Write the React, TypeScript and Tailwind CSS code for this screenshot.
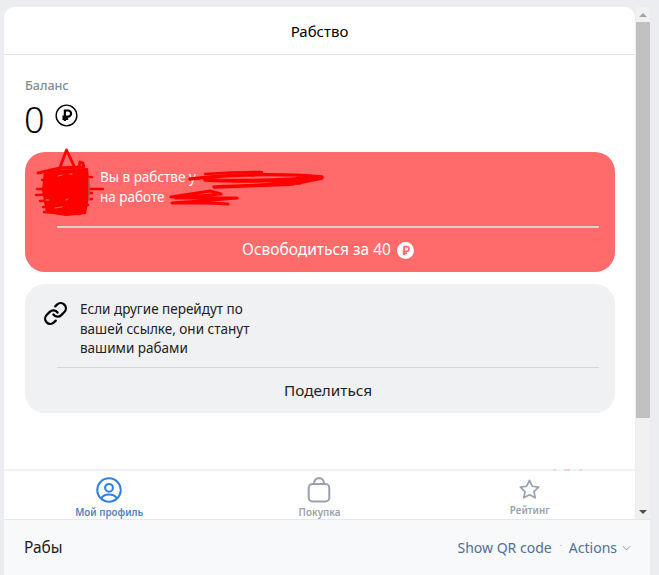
import { useState } from 'react';

function RubleIcon({ className }: { className?: string }) {
  return (
    <svg viewBox="0 0 24 24" className={className} fill="none" stroke="currentColor">
      <circle cx="12" cy="12" r="10.800" strokeWidth="1.500" />
      <path d="M10.300 17.800V6.800h3.300a3.200 3.200 0 0 1 0 6.400H7.800M7.800 15.600h6" strokeWidth="2.300" />
    </svg>
  );
}

function RubleFilled() {
  return (
    <svg viewBox="0 0 24 24" className="w-[17px] h-[17px]">
      <circle cx="12" cy="12" r="12" fill="#ffffff" />
      <path d="M10 18.500V6.500h3.600a3.400 3.400 0 0 1 0 6.800H8M8 16h6.200" fill="none" stroke="#ff6b6b" strokeWidth="2.400" />
    </svg>
  );
}

// red marker scrawl lying over the avatar and the names
function Scribble() {
  return (
    <svg viewBox="30 145 300 75" className="absolute left-[30px] top-[145px] w-[300px] h-[75px] pointer-events-none" fill="none" stroke="#ff0000" strokeLinecap="round" strokeLinejoin="round">
      <path d="M59 170 L66.500 150 L75 168" strokeWidth="2.800" />
      <path d="M78 170 L80 162 L83 163 L85 174" strokeWidth="2.800" />
      <path d="M38 173 L60 168 L82 167" strokeWidth="3" />
      <path d="M44 171 L88 168 L90 190 L86 214 L66 216 L46 213 L42 190 Z" fill="#ff0000" stroke="none" />
      <path d="M37 189 L103 189 M36 195 L92 193 M42 180 L92 177 M40 201 L92 199 M44 212 L80 214 M43 207 L88 205" strokeWidth="2.400" />
      <path d="M89 178 L89 200" stroke="#8a7a60" strokeWidth="1.200" />
      <path d="M58 176 L62 175 M70 174 L72 174 M46 200 L49 200 M55 208 L62 207 M66 200 L68 199" stroke="#a8965a" strokeWidth="1" />
      <path d="M190 179 C215 176 270 172 322 177 C290 180 240 181 205 180 C240 182 290 181 322 178 L292 184 C260 186 225 186 214 187 C240 187 270 184 300 183" strokeWidth="3.400" />
      <path d="M205 174 C235 172 255 172 262 172" strokeWidth="2.400" />
      <path d="M171 197 L210 191 L221 194 L176 198 L237 198 L200 201 L172 203 L210 203 L228 204" strokeWidth="3.200" />
    </svg>
  );
}

function TabItem({ label, active, children, labelClass }: { label: string; active?: boolean; children: React.ReactNode; labelClass: string }) {
  return (
    <div className={`flex-1 flex flex-col items-center ${labelClass}`}>
      {children}
      <span className={`text-[9.800px] font-semibold leading-[12px] ${active ? 'text-[#5181c7]' : 'text-[#99a2ad]'}`}>{label}</span>
    </div>
  );
}

export default function App() {
  const [tab] = useState('profile');

  return (
    <div className="relative w-[659px] h-[575px] overflow-hidden bg-[#ebedf0] pt-[7px] pl-[4px] pr-[9px] flex flex-col font-['Noto_Sans','Open_Sans',sans-serif] text-[#000000]">
      <div className="flex-1 flex min-h-0">
        <div className="w-[631px] bg-white rounded-t-[10px] flex flex-col">
          <div className="h-[48px] shrink-0 flex items-center justify-center border-b border-[#e3e4e6] pt-[1px] text-[15px]">
            Рабство
          </div>
          <div className="flex-1 pl-[21px] pr-[20px] pt-[22px]">
            <div className="text-[12.500px] font-medium leading-[18px] text-[#818c99]">Баланс</div>
            <div className="flex items-start h-[47px] mt-[1px]">
              <span className="text-[36px] font-light leading-[47px] -ml-[1px]">0</span>
              <RubleIcon className="w-[23px] h-[23px] ml-[10px] mt-[8px]" />
            </div>
            <div className="mt-[9px] h-[120px] rounded-[20px] bg-[#ff6b6b] text-white flex flex-col">
              <div className="h-[74px] shrink-0 pl-[75px] pt-[16px] text-[13.500px] leading-[19.500px]">
                <div>Вы в рабстве у</div>
                <div>на работе</div>
              </div>
              <div className="ml-[32px] mr-[16px] h-[2px] bg-[#dcd0d0]" />
              <div className="flex-1 ml-[32px] mr-[16px] flex items-center justify-center gap-[6px] text-[15.500px]">
                <span>Освободиться за 40</span>
                <RubleFilled />
              </div>
            </div>
            <div className="mt-[12px] h-[129px] rounded-[20px] bg-[#f0f1f3] flex flex-col">
              <div className="h-[83px] shrink-0 flex pl-[18px] pt-[16px]">
                <svg viewBox="0 0 24 24" className="w-[25px] h-[25px] mt-[1px]" fill="none" stroke="#000000" strokeWidth="2.200" strokeLinecap="round" strokeLinejoin="round">
                  <path d="M10 13a5 5 0 0 0 7.540.540l3-3a5 5 0 0 0-7.070-7.070l-1.720 1.710" />
                  <path d="M14 11a5 5 0 0 0-7.540-.540l-3 3a5 5 0 0 0 7.070 7.070l1.710-1.710" />
                </svg>
                <div className="ml-[12px] text-[13.500px] leading-[19.500px] text-[#222222]">
                  <div>Если другие перейдут по</div>
                  <div>вашей ссылке, они станут</div>
                  <div>вашими рабами</div>
                </div>
              </div>
              <div className="ml-[32px] mr-[16px] h-[1px] bg-[#d5d6d8]" />
              <div className="flex-1 ml-[32px] mr-[16px] flex items-center justify-center text-[15.300px] text-[#222222]">Поделиться</div>
            </div>
          </div>
          <div className="relative h-[50px] shrink-0 border-t-2 border-[#f0f1f2] flex">
            <TabItem label="Мой профиль" active={tab === 'profile'} labelClass="pt-[6px]">
              <svg viewBox="0 0 24 24" className="w-[26px] h-[26px] mb-[4px]" fill="none" stroke="#2d81e0" strokeWidth="1.900">
                <circle cx="12" cy="12" r="10.800" />
                <circle cx="12" cy="10" r="3.600" />
                <path d="M5 19.500c1.500-2.600 4-3.400 7-3.400s5.500.8 7 3.400" />
              </svg>
            </TabItem>
            <TabItem label="Покупка" labelClass="pt-[5px]">
              <svg viewBox="0 0 24 24" className="w-[26px] h-[27px] mb-[4px]" fill="none" stroke="#99a2ad" strokeWidth="1.900">
                <rect x="2.500" y="7" width="19" height="16" rx="3.500" />
                <path d="M7.500 7V6a4.500 4.500 0 0 1 9 0v1" />
                <path d="M7.500 11h.01M16.500 11h.01" strokeWidth="1.500" />
              </svg>
            </TabItem>
            <TabItem label="Рейтинг" labelClass="pt-[7px]">
              <svg viewBox="0 0 24 24" className="w-[23px] h-[23px] mb-[4px]" fill="none" stroke="#99a2ad" strokeWidth="1.800" strokeLinejoin="round">
                <path d="M12 2.500l2.900 6.100 6.600.9-4.800 4.600 1.200 6.600-5.900-3.200-5.900 3.200 1.200-6.600L2.500 9.500l6.600-.9z" />
              </svg>
            </TabItem>
            <svg viewBox="0 0 30 2" className="absolute left-[549px] -top-[2px] w-[30px] h-[2px]">
              <path d="M0 0h3v2H0zM11 0h6v2h-6zM27 0h2v2h-2z" fill="#fbd0d0" />
            </svg>
          </div>
        </div>
        <div className="ml-[1px] w-[14px] bg-[#f1f1f1] flex flex-col items-center">
          <div className="h-[15px] shrink-0 flex items-center justify-center">
            <div className="w-0 h-0 border-x-[4px] border-x-transparent border-b-[4px] border-b-[#a3a3a3]" />
          </div>
          <div className="w-full h-[396px] bg-[#c1c1c1]" />
          <div className="flex-1" />
          <div className="h-[15px] shrink-0 flex items-center justify-center">
            <div className="w-0 h-0 border-x-[4px] border-x-transparent border-t-[4px] border-t-[#505050]" />
          </div>
        </div>
      </div>
      <div className="h-[56px] shrink-0 bg-[#f8f9fb] border-t border-[#e6e7e9] flex items-center pl-[20px] pr-[19px]">
        <span className="text-[15.500px] text-[#222222]">Рабы</span>
        <div className="ml-auto flex items-center text-[14px] text-[#4d7198]">
          <span>Show QR code</span>
          <span className="ml-[8px] mr-[7px] text-[8px] text-[#9db0c4] -mt-[4px]">·</span>
          <span>Actions</span>
          <svg viewBox="0 0 12 8" className="w-[9px] h-[6px] ml-[5px]" fill="none" stroke="#8093a8" strokeWidth="1.300">
            <path d="M1 1.500l5 5 5-5" />
          </svg>
        </div>
      </div>
      <Scribble />
    </div>
  );
}
